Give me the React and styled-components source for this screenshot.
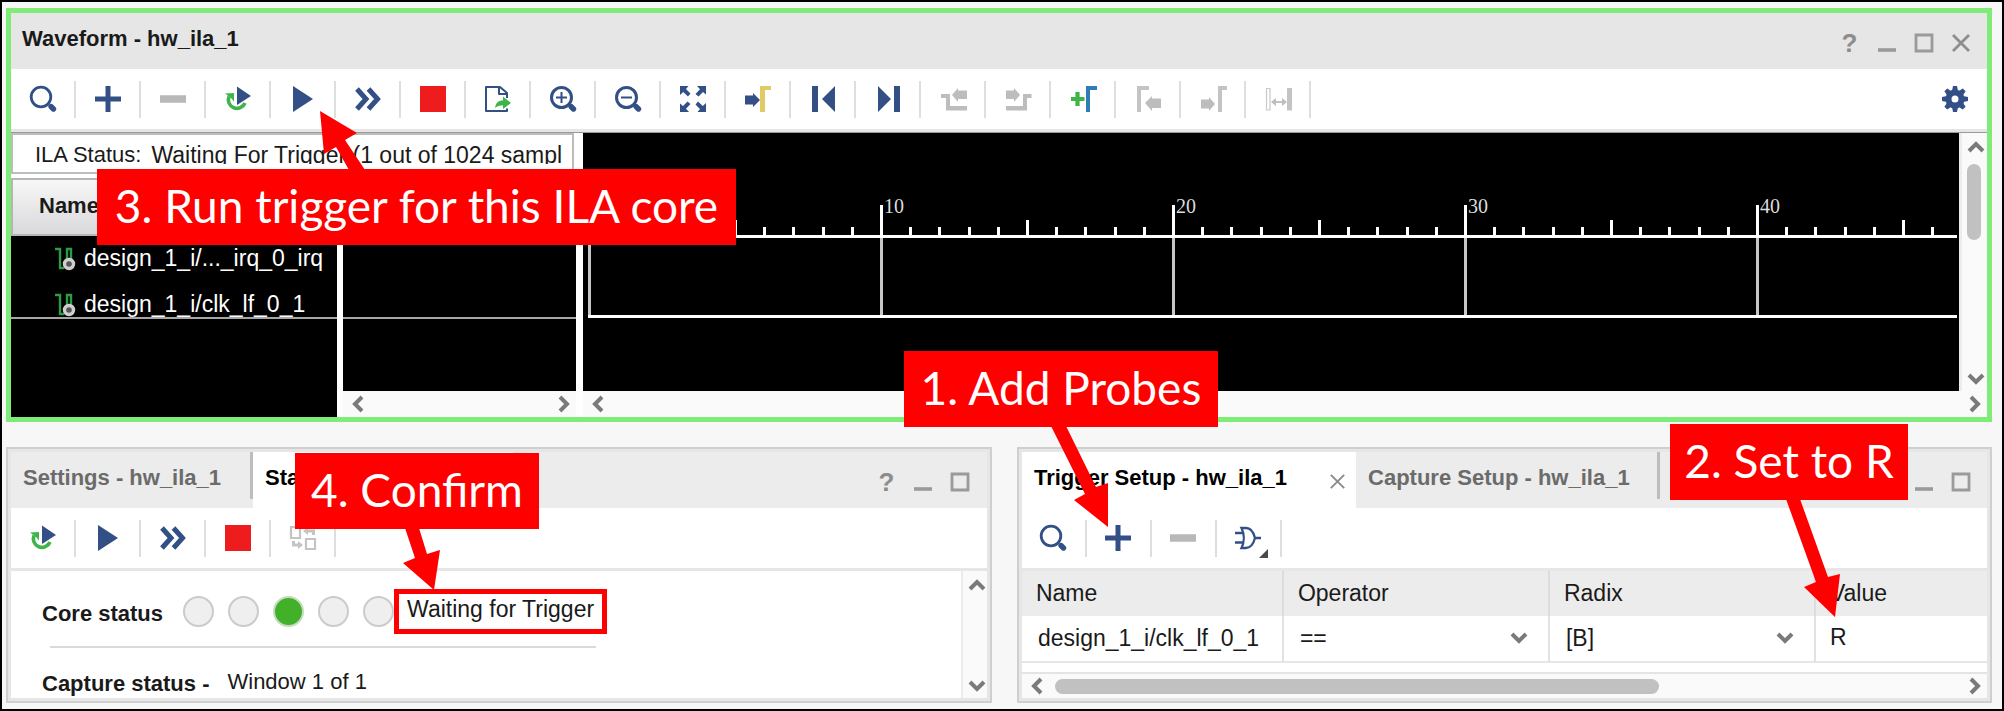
import React from "react";
import styled, { createGlobalStyle, css } from "styled-components";

const navy = "#324f86";
const muted = "#bdbdbd";
const green = "#3fb549";

const GlobalStyle = createGlobalStyle`
  *, *::before, *::after { box-sizing: border-box; }
  body { margin: 0; background: #f7f7f7; }
  body, button, input, select, table {
    font-family: "Liberation Sans", Arial, sans-serif;
    font-size: 22px;
    line-height: 26px;
    color: #1a1a1a;
  }
  button, input, select { margin: 0; padding: 0; border: 0; background: none; }
`;

const Frame = styled.div`
  border: 2px solid #000;
  background: #f7f7f7;
  padding: 6px 10px 6px 4px;
  display: flex;
  flex-direction: column;
  gap: 25px;
  overflow: hidden;
`;

const WavePanel = styled.section`
  position: relative;
  border: 5px solid #7eec77;
  background: #fff;
`;

const DockRow = styled.div`
  display: flex;
  gap: 25px;
`;

const DockPanel = styled.section`
  position: relative;
  flex: ${(p) => p.$grow} 1 0;
  min-width: 0;
  border: 2px solid #cfcfcf;
  background: #e6e6e6;
  padding: 3px;
`;

const TitleBar = styled.header`
  height: 56px;
  background: ${(p) => (p.$light ? "#ececec" : "#e6e6e6")};
  display: flex;
  align-items: stretch;
`;

const Title = styled.h2`
  margin: 0;
  flex: 1;
  padding: 13px 0 0 11px;
  font-size: 22px;
  font-weight: 700;
`;

const TabList = styled.div`
  flex: 1;
  min-width: 0;
  display: flex;
`;

const Tab = styled.div`
  display: flex;
  padding: 13px 11px 0 12px;
  gap: 43px;
  background: ${(p) => (p.$active ? "#fff" : "transparent")};
`;

const TabButton = styled.button`
  height: 26px;
  font-weight: 700;
  white-space: nowrap;
  color: ${(p) => (p.$active ? "#000" : "#6b6b6b")};
`;

const TabClose = styled.button`
  height: 32px;
  display: flex;
  align-items: center;
`;

const TabRule = styled.div`
  width: 3px;
  height: 47px;
  margin-left: ${(p) => p.$gap}px;
  background: #bdbdbd;
`;

const WindowButtons = styled.div`
  display: flex;
  padding: 4px 8px 0 0;
`;

const WindowButton = styled.button`
  width: 37px;
  display: flex;
  align-items: center;
  justify-content: center;
  color: #8d8d8d;
  font-weight: 700;
  font-size: 26px;
`;

const Toolbar = styled.div`
  height: 60px;
  background: #fff;
  display: flex;
  align-items: center;
`;

const ToolCell = styled.div`
  width: 65px;
  height: 37px;
  border-right: 2px solid #dedede;
  display: flex;
  align-items: center;
  justify-content: center;
`;

const ToolButton = styled.button`
  width: 26px;
  height: 26px;
  display: block;
`;

const SettingsButton = styled(ToolButton)`
  margin: 0 19px 0 auto;
`;

const Glyph = styled.svg`
  display: block;
  overflow: visible;
  fill: none;
`;

const ToolRule = styled.div`
  height: ${(p) => p.$size}px;
  background: #e6e6e6;
  border-bottom: ${(p) => (p.$dark ? "1px solid #9a9a9a" : "0")};
`;

const WaveBody = styled.div`
  display: flex;
  gap: 7px;
  height: 284px;
`;

const SignalSide = styled.div`
  width: 565px;
  flex: none;
  display: flex;
  flex-direction: column;
  gap: 4px;
`;

const IlaStatus = styled.div`
  height: 41px;
  margin-right: 2px;
  border: 2px solid #bdbdbd;
  padding: 7px 0 0 22px;
  display: flex;
  gap: 10px;
  white-space: nowrap;
`;

const IlaText = styled.span`
  height: 22px;
  overflow: hidden;
  font-size: ${(p) => p.$size}px;
`;

const SignalColumns = styled.div`
  flex: 1;
  display: flex;
  gap: 6px;
`;

const SignalColumn = styled.div`
  ${(p) => (p.$wide ? css`width: 326px; flex: none;` : css`flex: 1;`)}
  display: flex;
  flex-direction: column;
  background: #000;
`;

const ColumnHeader = styled.div`
  height: 58px;
  border: 2px solid #b5b5b5;
  border-right-width: 0;
  background: linear-gradient(#f7f7f7, #d9d9dc);
  padding: 13px 0 0 26px;
  font-weight: 700;
`;

const SignalList = styled.ul`
  list-style: none;
  margin: 0;
  padding: 9px 0 0 44px;
  height: 83px;
  display: flex;
  flex-direction: column;
  gap: 20px;
  border-bottom: 2px solid #a6a6a6;
`;

const Signal = styled.li`
  height: 26px;
  display: flex;
  gap: 9px;
  color: #fff;
  font-size: 23px;
  white-space: nowrap;
`;

const Fill = styled.div`
  flex: 1;
`;

const WaveSide = styled.div`
  flex: 1;
  min-width: 0;
  display: flex;
  flex-direction: column;
`;

const WaveRow = styled.div`
  height: 258px;
  display: flex;
`;

const WaveCanvas = styled.div`
  flex: 1;
  min-width: 0;
  background: #000;
  padding-right: 2px;
`;

const WaveSvg = styled.svg`
  display: block;
  width: 100%;
  height: 258px;
`;

const HBar = styled.div`
  height: ${(p) => p.$height || 26}px;
  background: #fafafa;
  border-top: ${(p) => (p.$ruled ? "2px solid #e4e4e4" : "0")};
  padding: 0 6px 0 9px;
  display: flex;
  align-items: center;
  justify-content: space-between;
`;

const HTrack = styled.div`
  flex: 1;
  margin: 0 12px;
`;

const HThumb = styled.div`
  width: 67%;
  height: 15px;
  border-radius: 8px;
  background: #c1c1c1;
`;

const VBar = styled.div`
  width: ${(p) => p.$width}px;
  flex: none;
  background: #fafafa;
  border-left: ${(p) => p.$edge}px solid #ececec;
  padding: 8px 2px 6px 5px;
  display: flex;
  flex-direction: column;
  justify-content: space-between;
`;

const VThumb = styled.div`
  width: 14px;
  height: 76px;
  margin: 11px 0 auto;
  border-radius: 7px;
  background: #c1c1c1;
`;

const ArrowButton = styled.button`
  display: block;
`;

const StatusBody = styled.div`
  height: 127px;
  background: #fff;
  display: flex;
`;

const StatusContent = styled.div`
  flex: 1;
  min-width: 0;
  padding: 18px 0 0 31px;
  overflow: hidden;
`;

const StatusRow = styled.div`
  display: flex;
  align-items: center;
  height: ${(p) => p.$height}px;
  white-space: nowrap;
`;

const StatusLabel = styled.span`
  padding-top: 4px;
  margin-right: ${(p) => p.$gap}px;
  font-weight: 700;
`;

const Lamps = styled.div`
  display: flex;
  gap: 14px;
`;

const Lamp = styled.span`
  width: 31px;
  height: 31px;
  border-radius: 50%;
  border: 2px solid ${(p) => (p.$on ? "#c4dcbd" : "#cbcbcb")};
  background: ${(p) => (p.$on ? "#43b02a" : "#efefef")};
`;

const Highlight = styled.span`
  height: 45px;
  border: 5px solid #f00;
  padding: 2px 8px 0;
  font-size: 23px;
`;

const StatusRule = styled.hr`
  width: 546px;
  height: 2px;
  margin: 12px 0 18px 8px;
  border: 0;
  background: #dadada;
`;

const TriggerBody = styled.div`
  height: 127px;
  background: #fff;
  display: flex;
  flex-direction: column;
  justify-content: space-between;
`;

const ProbeTable = styled.table`
  width: 100%;
  table-layout: fixed;
  border-collapse: separate;
  border-spacing: 0;
`;

const Head = styled.th`
  width: ${(p) => (p.$width ? `${p.$width}px` : "auto")};
  height: 45px;
  padding: 0 0 2px 14px;
  background: #ececec;
  border-right: 2px solid #dcdcdc;
  font-size: 23px;
  font-weight: 400;
  text-align: left;
  &:last-child { border-right: 0; }
`;

const Cell = styled.td`
  height: 47px;
  padding: 0 0 2px 16px;
  border-right: 2px solid #e2e2e2;
  border-bottom: 2px solid #e6e6e6;
  font-size: 23px;
  white-space: nowrap;
  &:last-child { border-right: 0; padding-left: 14px; }
`;

const SelectBox = styled.div`
  display: flex;
  align-items: center;
  padding-right: 20px;
`;

const Select = styled.select`
  appearance: none;
  flex: 1;
  height: 30px;
  font-size: 23px;
`;

const ValueInput = styled.input`
  width: 100px;
  height: 30px;
  font-size: 23px;
`;

const Callout = styled.div`
  position: absolute;
  z-index: 2;
  top: ${(p) => p.$top}px;
  ${(p) => (p.$right !== undefined ? `right: ${p.$right}px;` : `left: ${p.$left}px;`)}
  width: ${(p) => p.$width}px;
  height: 76px;
  background: #f00;
  color: #fff;
  font-family: Lato, "Open Sans", sans-serif;
  font-size: 46px;
  line-height: 74px;
  text-align: center;
  white-space: nowrap;
`;

const Pointer = styled.svg`
  position: absolute;
  left: 0;
  top: 0;
  width: 100%;
  height: 100%;
  overflow: visible;
  pointer-events: none;
  fill: #f00;
`;

const Marker = ({ color, x, end }) => (
  <path fill={color} d={`M${x} 0H${end}V4H${x + 4}V26H${x}Z`} />
);

const icons = {
  search: (
    <g stroke={navy}>
      <circle cx="11" cy="11" r="9.8" strokeWidth="2.8" />
      <path d="M21 20.5L23.5 23" strokeWidth="5.4" strokeLinecap="round" />
    </g>
  ),
  add: <path d="M13 0V26M0 13H26" stroke={navy} strokeWidth="5" />,
  remove: <path d="M0 13H26" stroke="#b8b8b8" strokeWidth="7.5" />,
  rerun: (
    <g>
      <path d="M4 10.5A8.6 8.6 0 1 0 20 17" stroke={green} strokeWidth="3.6" />
      <path d="M0 7.5L9 7L9 15.5L6.3 12.2Z" fill={green} />
      <path d="M12 .5L26 10L12 19Z" fill={navy} />
    </g>
  ),
  run: <path d="M3 0L23 13L3 26Z" fill={navy} />,
  runNow: <path d="M2 3L11 13L2 23M13.500 3L22.500 13L13.500 23" stroke={navy} strokeWidth="5" />,
  stop: <path d="M0 0H26V26H0Z" fill="#ee1c1c" />,
  exportFile: (
    <g>
      <path d="M22 12V7L15 1H1V25H22V22.500M14 1V8H22" stroke={navy} strokeWidth="2" strokeLinejoin="round" />
      <path d="M10 22C11 16 14 14.500 18 14.500V10.500L26 17L18 23V19.500C15 19.500 12 20 10 22Z" fill={green} />
    </g>
  ),
  zoomIn: (
    <g stroke={navy}>
      <circle cx="11.500" cy="11.500" r="10" strokeWidth="3" />
      <path d="M11.500 6V17M6 11.500H17" strokeWidth="2" />
      <path d="M21 20.500L23.500 23" strokeWidth="5.400" strokeLinecap="round" />
    </g>
  ),
  zoomOut: (
    <g stroke={navy}>
      <circle cx="11.500" cy="11.500" r="10" strokeWidth="3" />
      <path d="M6 11.500H17" strokeWidth="2" />
      <path d="M21 20.500L23.500 23" strokeWidth="5.400" strokeLinecap="round" />
    </g>
  ),
  fit: (
    <g fill={navy} stroke="none">
      {[0, 90, 180, 270].map((a) => (
        <path key={a} transform={`rotate(${a} 13 13)`} d="M0 0H8.500L6 3L10.500 7.500L8 10.500L3.200 6L0 9Z" />
      ))}
    </g>
  ),
  gotoTrigger: (
    <g>
      <path fill={navy} d="M0 9.500H8V7L15 14L8 21V18.500H0Z" />
      <path fill="#e3cb63" d="M15 0H26V4H20V26H15Z" />
    </g>
  ),
  previous: <path fill={navy} d="M2 0H8V26H2ZM25 0V26L12 13Z" />,
  next: <path fill={navy} d="M3 0L16 13L3 26ZM19 0H25V26H19Z" />,
  prevEdge: <path fill={muted} d="M1 8H10V20H27V24.500H6V12H1ZM12 9L18 2V4.500H27V13H18V16Z" />,
  nextEdge: <path fill={muted} d="M26.500 8H18V20H1V24.500H22V12H26.500ZM15 9L9 2V4.500H1V13H9V16Z" />,
  addMarker: (
    <g>
      <path d="M7.500 6V20M1 13H14.500" stroke={green} strokeWidth="4.200" />
      <Marker color="#2f7db6" x={16} end={27} />
    </g>
  ),
  prevMarker: (
    <g>
      <Marker color="#c4c4c4" x={2} end={14} />
      <path fill={muted} d="M10 17L17 10V12.500H26V22H17V25Z" />
    </g>
  ),
  nextMarker: (
    <g>
      <path fill={muted} d="M15 18L9 11V13.500H1V22.500H9V25Z" />
      <Marker color="#c4c4c4" x={18} end={27} />
    </g>
  ),
  swapCursors: (
    <g>
      <path d="M1.500 2.500H5V24H1.500Z" stroke="#c9c9c9" strokeWidth="1.200" />
      <path d="M22 2H27V24.500H22Z" fill="#c4c4c4" />
      <path d="M8 16H20" stroke={muted} strokeWidth="1.800" />
      <path d="M6 16L11 12V20ZM22 16L17 12V20Z" fill={muted} />
    </g>
  ),
  layout: (
    <g>
      <path d="M1 2H10V13H1ZM16 14H25V24H16Z" stroke="#c4c4c4" strokeWidth="2.200" />
      <path d="M13 6L18 2V4.500H25V10H22V7.500H18V10ZM13 20L8 16V18.500H5V16H2V21.500H8V24Z" fill="#c4c4c4" />
    </g>
  ),
  gate: (
    <g>
      <path d="M0 8H9M0 17.500H9M19.500 13H26M6.500 3H11C15.500 3 18.500 7 20 13C18.500 18.500 15.500 23 11 23H6.500C9.500 17 9.500 9 6.500 3Z" stroke={navy} strokeWidth="2.300" />
      <path d="M33 24V33H24Z" fill="#4a4a4a" />
    </g>
  ),
  gear: (
    <g>
      <circle cx="13" cy="13" r="6.500" stroke={navy} strokeWidth="6" />
      {[0, 45, 90, 135, 180, 225, 270, 315].map((a) => (
        <path key={a} transform={`rotate(${a} 13 13)`} d="M11 0H15L16 5H10Z" fill={navy} />
      ))}
    </g>
  ),
};

const Icon = ({ name }) => (
  <Glyph width="26" height="26" viewBox="0 0 26 26" aria-hidden="true">
    {icons[name]}
  </Glyph>
);

const Tools = ({ items, children }) => (
  <Toolbar role="toolbar">
    {items.map(([name, label]) => (
      <ToolCell key={name}>
        <ToolButton type="button" aria-label={label}>
          <Icon name={name} />
        </ToolButton>
      </ToolCell>
    ))}
    {children}
  </Toolbar>
);

const chevrons = {
  up: "M2 10L9 3L16 10",
  down: "M2 2L9 9L16 2",
  left: "M10 2L3 9L10 16",
  right: "M2 2L9 9L2 16",
};

const Chevron = ({ dir }) => {
  const tall = dir === "left" || dir === "right";
  return (
    <Glyph width={tall ? 12 : 18} height={tall ? 18 : 12} aria-hidden="true">
      <path d={chevrons[dir]} stroke="#7a7a7a" strokeWidth="4" />
    </Glyph>
  );
};

const Scroll = ({ dir }) => (
  <ArrowButton type="button" aria-label={`Scroll ${dir}`}>
    <Chevron dir={dir} />
  </ArrowButton>
);

const CloseGlyph = ({ size, width }) => (
  <Glyph width={size} height={size} viewBox="0 0 18 18" aria-hidden="true">
    <path d="M1 1L17 17M17 1L1 17" stroke="#8d8d8d" strokeWidth={width} />
  </Glyph>
);

const WindowControls = ({ closable }) => (
  <WindowButtons>
    <WindowButton type="button" aria-label="Help">?</WindowButton>
    <WindowButton type="button" aria-label="Minimize">
      <Glyph width="18" height="18"><path d="M0 16H18" stroke="#9a9a9a" strokeWidth="3.600" /></Glyph>
    </WindowButton>
    <WindowButton type="button" aria-label="Maximize">
      <Glyph width="18" height="18"><path d="M1 1H17V17H1Z" stroke="#9a9a9a" strokeWidth="2.800" /></Glyph>
    </WindowButton>
    {closable && (
      <WindowButton type="button" aria-label="Close">
        <CloseGlyph size={18} width={2.8} />
      </WindowButton>
    )}
  </WindowButtons>
);

const ProbeGlyph = () => (
  <Glyph width="20" height="26" aria-hidden="true">
    <path d="M0 4H5V23H9M12 17V4H16V14" stroke="#2f9a45" strokeWidth="2.400" />
    <circle cx="14" cy="19" r="4.500" stroke="#cfcfcf" strokeWidth="3.400" fill="#555" />
  </Glyph>
);

const ticks = Array.from({ length: 90 }, (_, i) => ({ i, x: 5 + Math.round(29.2 * i) }));

const Wave = () => (
  <WaveSvg role="img" aria-label="Waveform time axis">
    {ticks.map(({ i, x }) => {
      const top = i % 10 === 0 ? 72 : i % 5 === 0 ? 87 : 94;
      return (
        <g key={i}>
          <rect x={x} y={top} width="3" height={102 - top} fill="#fff" />
          {i % 10 === 0 && <rect x={x} y="105" width="3" height="77" fill="#c6c6c6" />}
          {i % 10 === 0 && (
            <text x={x + 4} y="80" fill="#dcdcdc" fontFamily="Liberation Serif, serif" fontSize="20">
              {i}
            </text>
          )}
        </g>
      );
    })}
    <rect x="5" y="102" width="100%" height="3" fill="#fff" />
    <rect x="5" y="182" width="100%" height="3" fill="#fff" />
  </WaveSvg>
);

const Note = ({ arrow, children, ...place }) => (
  <Callout {...place}>
    <Pointer aria-hidden="true"><path d={arrow} /></Pointer>
    {children}
  </Callout>
);

const waveTools = [
  ["search", "Search"], ["add", "Add"], ["remove", "Remove"], ["rerun", "Auto re-trigger"],
  ["run", "Run trigger"], ["runNow", "Run trigger immediate"], ["stop", "Stop trigger"],
  ["exportFile", "Export data"], ["zoomIn", "Zoom in"], ["zoomOut", "Zoom out"], ["fit", "Zoom fit"],
  ["gotoTrigger", "Go to trigger"], ["previous", "First"], ["next", "Last"],
  ["prevEdge", "Previous transition"], ["nextEdge", "Next transition"], ["addMarker", "Add marker"],
  ["prevMarker", "Previous marker"], ["nextMarker", "Next marker"], ["swapCursors", "Swap cursors"],
];
const statusTools = [
  ["rerun", "Auto re-trigger"], ["run", "Run trigger"], ["runNow", "Run trigger immediate"],
  ["stop", "Stop trigger"], ["layout", "Change layout"],
];
const triggerTools = [["search", "Search"], ["add", "Add probes"], ["remove", "Remove probe"], ["gate", "Trigger condition"]];
const signals = ["design_1_i/..._irq_0_irq", "design_1_i/clk_lf_0_1"];
const lamps = [false, false, true, false, false];

const WaveformWindow = () => (
  <WavePanel>
    <TitleBar>
      <Title>Waveform - hw_ila_1</Title>
      <WindowControls closable />
    </TitleBar>
    <Tools items={waveTools}>
      <SettingsButton type="button" aria-label="Settings"><Icon name="gear" /></SettingsButton>
    </Tools>
    <ToolRule $size={4} $dark />
    <WaveBody>
      <SignalSide>
        <IlaStatus>
          <IlaText $size={22}>ILA Status:</IlaText>
          <IlaText $size={23}>Waiting For Trigger (1 out of 1024 sampl</IlaText>
        </IlaStatus>
        <SignalColumns>
          <SignalColumn $wide>
            <ColumnHeader>Name</ColumnHeader>
            <SignalList>
              {signals.map((s) => (
                <Signal key={s}><ProbeGlyph />{s}</Signal>
              ))}
            </SignalList>
          </SignalColumn>
          <SignalColumn>
            <ColumnHeader />
            <SignalList />
            <Fill />
            <HBar><Scroll dir="left" /><Scroll dir="right" /></HBar>
          </SignalColumn>
        </SignalColumns>
      </SignalSide>
      <WaveSide>
        <WaveRow>
          <WaveCanvas><Wave /></WaveCanvas>
          <VBar $width={28} $edge={3}>
            <Scroll dir="up" />
            <VThumb />
            <Scroll dir="down" />
          </VBar>
        </WaveRow>
        <HBar><Scroll dir="left" /><Scroll dir="right" /></HBar>
      </WaveSide>
    </WaveBody>
    <Note $left={86} $top={156} $width={639} arrow="M223 -58L260 -36L248 -29L268 1H252L239 -22L227 -15Z">
      3. Run trigger for this ILA core
    </Note>
  </WavePanel>
);

const StatusWindow = () => (
  <DockPanel $grow={986}>
    <TitleBar $light>
      <TabList role="tablist">
        <Tab><TabButton type="button" role="tab">Settings - hw_ila_1</TabButton></Tab>
        <TabRule $gap={18} />
        <Tab $active>
          <TabButton type="button" role="tab" $active>Status - hw_ila_1</TabButton>
          <TabClose type="button" aria-label="Close tab"><CloseGlyph size={15} width={2.4} /></TabClose>
        </Tab>
      </TabList>
      <WindowControls />
    </TitleBar>
    <Tools items={statusTools} />
    <ToolRule $size={3} />
    <StatusBody>
      <StatusContent>
        <StatusRow $height={45}>
          <StatusLabel $gap={20}>Core status</StatusLabel>
          <Lamps>{lamps.map((on, i) => <Lamp key={i} $on={on} />)}</Lamps>
          <Highlight>Waiting for Trigger</Highlight>
        </StatusRow>
        <StatusRule />
        <StatusRow $height={32}>
          <StatusLabel $gap={18}>Capture status -</StatusLabel>
          <span>Window 1 of 1</span>
        </StatusRow>
      </StatusContent>
      <VBar $width={26} $edge={2}><Scroll dir="up" /><Scroll dir="down" /></VBar>
    </StatusBody>
    <Note $left={287} $top={4} $width={244} arrow="M110 75H124L132 101L145 97L139 137L108 110L120 105Z">
      4. Confirm
    </Note>
  </DockPanel>
);

const TriggerWindow = () => (
  <DockPanel $grow={975}>
    <TitleBar $light>
      <TabList role="tablist">
        <Tab $active>
          <TabButton type="button" role="tab" $active>Trigger Setup - hw_ila_1</TabButton>
          <TabClose type="button" aria-label="Close tab"><CloseGlyph size={15} width={2.4} /></TabClose>
        </Tab>
        <Tab><TabButton type="button" role="tab">Capture Setup - hw_ila_1</TabButton></Tab>
        <TabRule $gap={16} />
      </TabList>
      <WindowControls />
    </TitleBar>
    <Tools items={triggerTools} />
    <ToolRule $size={3} />
    <TriggerBody>
      <ProbeTable>
        <thead>
          <tr>
            <Head $width={262}>Name</Head>
            <Head $width={266}>Operator</Head>
            <Head $width={266}>Radix</Head>
            <Head>Value</Head>
          </tr>
        </thead>
        <tbody>
          <tr>
            <Cell>design_1_i/clk_lf_0_1</Cell>
            <Cell>
              <SelectBox>
                <Select aria-label="Operator" defaultValue="=="><option>==</option><option>!=</option></Select>
                <Chevron dir="down" />
              </SelectBox>
            </Cell>
            <Cell>
              <SelectBox>
                <Select aria-label="Radix" defaultValue="[B]"><option>[B]</option><option>[H]</option></Select>
                <Chevron dir="down" />
              </SelectBox>
            </Cell>
            <Cell><ValueInput aria-label="Value" defaultValue="R" /></Cell>
          </tr>
        </tbody>
      </ProbeTable>
      <HBar $height={26} $ruled>
        <Scroll dir="left" />
        <HTrack><HThumb /></HTrack>
        <Scroll dir="right" />
      </HBar>
    </TriggerBody>
    <Note $left={-115} $top={-98} $width={314} arrow="M147 75H162L192 136L204 132V176L170 149L181 143Z">
      1. Add Probes
    </Note>
    <Note $right={82} $top={-25} $width={238} arrow="M116 75H130L158 153L170 150L165 193L134 163L146 158Z">
      2. Set to R
    </Note>
  </DockPanel>
);

export default function App() {
  return (
    <>
      <GlobalStyle />
      <Frame>
        <WaveformWindow />
        <DockRow>
          <StatusWindow />
          <TriggerWindow />
        </DockRow>
      </Frame>
    </>
  );
}
